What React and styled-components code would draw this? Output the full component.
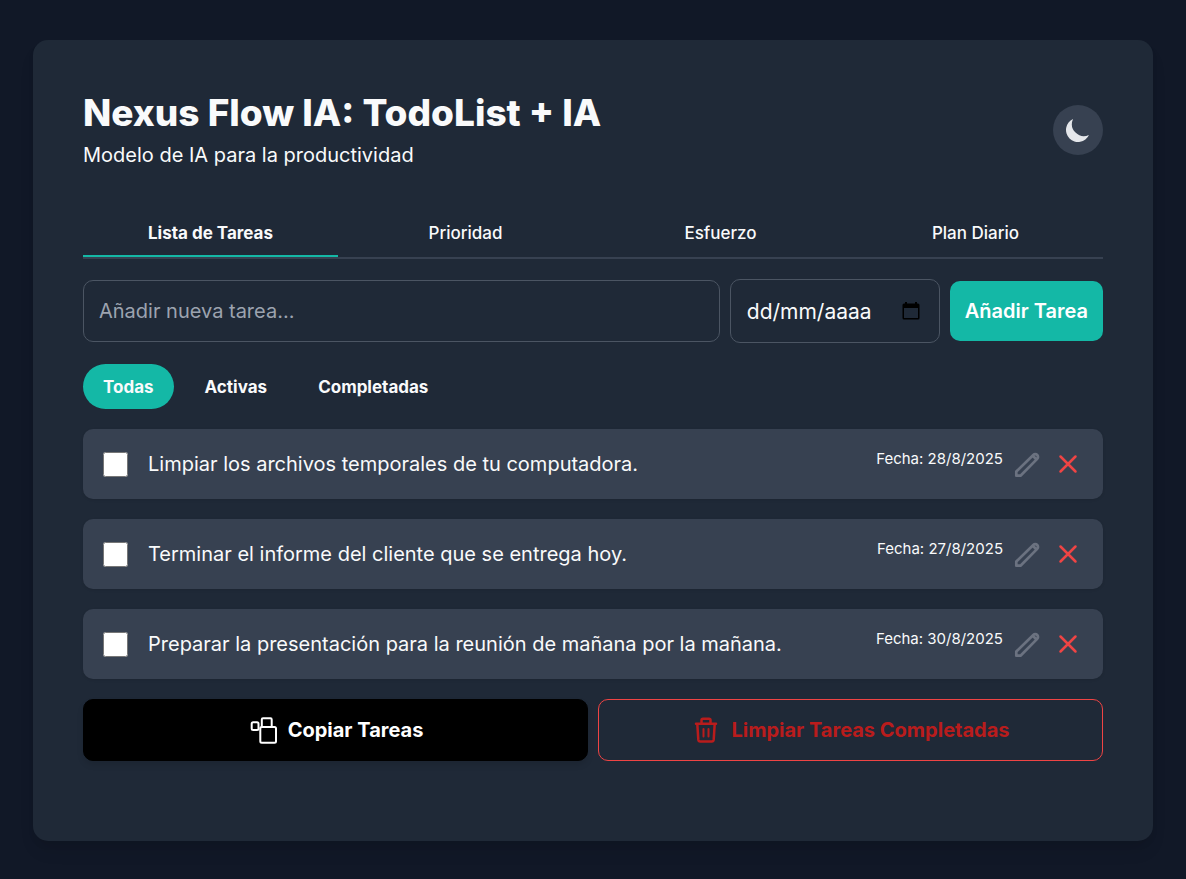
import React, { useState } from "react";
import styled, { createGlobalStyle } from "styled-components";

const GlobalStyle = createGlobalStyle`
  *, *::before, *::after { box-sizing: border-box; }
  body {
    margin: 0;
    min-height: 100vh;
    background: #111827;
    color: #f9fafb;
    font-family: Inter, "Liberation Sans", sans-serif;
    font-size: 20px;
    line-height: 30px;
  }
  button, input { font: inherit; color: inherit; margin: 0; }
  button { cursor: pointer; border: 0; background: none; padding: 0; }
  h1, p, ul { margin: 0; padding: 0; }
  svg { display: block; flex: none; }
`;

const Page = styled.div`
  padding: 40px 20px 38px;
`;

const Card = styled.main`
  max-width: 1120px;
  margin: 0 auto;
  padding: 50px 50px 80px;
  border-radius: 15px;
  background: #1f2937;
  box-shadow: 0 12px 18px -4px rgba(0, 0, 0, 0.1), 0 5px 8px -2px rgba(0, 0, 0, 0.06);
`;

const Header = styled.header`
  display: flex;
  align-items: center;
  justify-content: space-between;
  margin-bottom: 40px;
`;

const Title = styled.h1`
  margin-bottom: 5px;
  font-size: 37px;
  line-height: 45px;
  font-weight: 800;
`;

const ThemeButton = styled.button`
  display: grid;
  place-items: center;
  width: 50px;
  height: 50px;
  border-radius: 50%;
  background: #374151;
  color: #e5e7eb;
`;

const Tabs = styled.nav`
  display: flex;
  margin-bottom: 20px;
  border-bottom: 2px solid #374151;
`;

const Tab = styled.button`
  flex: 1;
  padding: 11px 10px 9px;
  border-bottom: 2px solid ${(p) => (p.$active ? "#14b8a6" : "transparent")};
  font-size: 17px;
  line-height: 25px;
  font-weight: ${(p) => (p.$active ? 700 : 500)};
`;

const AddForm = styled.form`
  display: flex;
  align-items: center;
  gap: 10px;
  margin-bottom: 21px;
`;

const TaskInput = styled.input`
  flex: 1;
  min-width: 0;
  padding: 15px;
  border: 1px solid #4b5563;
  border-radius: 10px;
  background: transparent;
  outline: none;
  &::placeholder { color: #9ca3af; opacity: 1; }
`;

const DateField = styled.div`
  display: flex;
  align-items: center;
  width: 210px;
  padding: 0 18px 0 16px;
  border: 1px solid #4b5563;
  border-radius: 10px;
`;

const DateInput = styled.input`
  flex: 1;
  min-width: 0;
  height: 62px;
  padding: 0;
  border: 0;
  background: transparent;
  outline: none;
  font-size: 21px;
  &::placeholder { color: #f9fafb; opacity: 1; }
`;

const AddButton = styled.button`
  padding: 15px;
  border-radius: 10px;
  background: #14b8a6;
  color: #fff;
  font-weight: 600;
`;

const Filters = styled.div`
  display: flex;
  gap: 11px;
  margin-bottom: 20px;
`;

const Filter = styled.button`
  padding: 11px 20px 9px;
  border-radius: 23px;
  background: ${(p) => (p.$active ? "#14b8a6" : "transparent")};
  font-size: 17px;
  line-height: 25px;
  font-weight: 700;
`;

const TaskList = styled.ul`
  display: grid;
  gap: 20px;
  margin-bottom: 20px;
  list-style: none;
`;

const TaskRow = styled.li`
  display: flex;
  align-items: center;
  padding: 20px;
  border-radius: 10px;
  background: #374151;
  box-shadow: 0 1px 3px rgba(0, 0, 0, 0.1);
`;

const TaskLabel = styled.label`
  display: flex;
  flex: 1;
  align-items: center;
  gap: 20px;
`;

const Checkbox = styled.input`
  width: 25px;
  height: 25px;
`;

const DueDate = styled.span`
  margin-right: 10px;
  padding-bottom: 10px;
  font-size: 15px;
  line-height: 20px;
`;

const IconButton = styled.button`
  color: ${(p) => p.$color};
  & + & { margin-left: 10px; }
`;

const Actions = styled.div`
  display: grid;
  grid-template-columns: 1fr 1fr;
  gap: 10px;
`;

const ActionButton = styled.button`
  display: flex;
  align-items: center;
  justify-content: center;
  gap: 10px;
  padding: 15px;
  border: 1px solid ${(p) => (p.$danger ? "#ef4444" : "#000")};
  border-radius: 10px;
  background: ${(p) => (p.$danger ? "transparent" : "#000")};
  color: ${(p) => (p.$danger ? "#b91c1c" : "#fff")};
  font-weight: 700;
  box-shadow: ${(p) => (p.$danger ? "none" : "0 4px 6px rgba(0, 0, 0, 0.1)")};
`;

const strokeProps = {
  fill: "none",
  stroke: "currentColor",
  strokeWidth: 2,
  strokeLinecap: "round",
  strokeLinejoin: "round",
  "aria-hidden": true,
};

const MoonIcon = () => (
  <svg width="30" height="30" viewBox="0 0 20 20" fill="currentColor" aria-hidden="true">
    <path d="M17.293 13.293A8 8 0 016.707 2.707a8.001 8.001 0 1010.586 10.586z" />
  </svg>
);

const CalendarIcon = () => (
  <svg width="20" height="20" viewBox="0 0 20 20" fill="#000" aria-hidden="true">
    <path fillRule="evenodd" d="M4 1h2v1.500h8V1h2v1.500h1A1.500 1.500 0 0118.500 4v13a1.500 1.500 0 01-1.500 1.500H3A1.500 1.500 0 011.500 17V4A1.500 1.500 0 013 2.500h1zM3 7v10h14V7z" />
  </svg>
);

const PencilIcon = () => (
  <svg width="30" height="30" viewBox="0 0 30 30" {...strokeProps} strokeWidth="2.700">
    <path d="M3.300 26.700v-4.200L20.300 6a2.700 2.700 0 013.900 3.900L7.500 26.700zM20 7l3.300 3.300" />
  </svg>
);

const CrossIcon = () => (
  <svg width="30" height="30" viewBox="0 0 24 24" {...strokeProps}>
    <path d="M6 6l12 12M18 6L6 18" />
  </svg>
);

const CopyIcon = () => (
  <svg width="30" height="30" viewBox="0 0 30 30" {...strokeProps}>
    <rect x="12.300" y="12" width="15.700" height="15.700" rx="1.500" />
    <path d="M13.800 12V4.500a1.200 1.200 0 011.200-1.200h7.500a1.200 1.200 0 011.200 1.200V12" />
    <rect x="3.700" y="7.300" width="6.800" height="7.700" rx="1.500" />
  </svg>
);

const TrashIcon = () => (
  <svg width="30" height="30" viewBox="0 0 30 30" {...strokeProps}>
    <path strokeWidth="2.500" d="M5 8.800h20M6.300 9l1 15.700a2 2 0 002 1.800h11.400a2 2 0 002-1.800l1-15.700M10.500 8.500V5.300a1.500 1.500 0 011.500-1.500h6a1.500 1.500 0 011.500 1.500v3.200" />
    <path d="M12.500 14v7.500M17.500 14v7.500" />
  </svg>
);

const TABS = ["Lista de Tareas", "Prioridad", "Esfuerzo", "Plan Diario"];
const FILTERS = ["Todas", "Activas", "Completadas"];
const TASKS = [
  { id: "t1", text: "Limpiar los archivos temporales de tu computadora.", date: "28/8/2025" },
  { id: "t2", text: "Terminar el informe del cliente que se entrega hoy.", date: "27/8/2025" },
  { id: "t3", text: "Preparar la presentación para la reunión de mañana por la mañana.", date: "30/8/2025" },
];

export default function App() {
  const [tab, setTab] = useState(TABS[0]);
  const [filter, setFilter] = useState(FILTERS[0]);
  return (
    <Page>
      <GlobalStyle />
      <Card>
        <Header>
          <div>
            <Title>Nexus Flow IA: TodoList + IA</Title>
            <p>Modelo de IA para la productividad</p>
          </div>
          <ThemeButton type="button" aria-label="Cambiar tema"><MoonIcon /></ThemeButton>
        </Header>
        <Tabs>
          {TABS.map((t) => (
            <Tab key={t} type="button" $active={t === tab} onClick={() => setTab(t)}>{t}</Tab>
          ))}
        </Tabs>
        <AddForm onSubmit={(e) => e.preventDefault()}>
          <TaskInput aria-label="Nueva tarea" placeholder="Añadir nueva tarea..." />
          <DateField>
            <DateInput aria-label="Fecha" placeholder="dd/mm/aaaa" />
            <button type="button" aria-label="Abrir calendario"><CalendarIcon /></button>
          </DateField>
          <AddButton type="submit">Añadir Tarea</AddButton>
        </AddForm>
        <Filters>
          {FILTERS.map((f) => (
            <Filter key={f} type="button" $active={f === filter} onClick={() => setFilter(f)}>{f}</Filter>
          ))}
        </Filters>
        <TaskList>
          {TASKS.map((task) => (
            <TaskRow key={task.id}>
              <TaskLabel htmlFor={task.id}>
                <Checkbox id={task.id} type="checkbox" />
                {task.text}
              </TaskLabel>
              <DueDate>Fecha: {task.date}</DueDate>
              <IconButton type="button" $color="#6b7280" aria-label="Editar"><PencilIcon /></IconButton>
              <IconButton type="button" $color="#ef4444" aria-label="Eliminar"><CrossIcon /></IconButton>
            </TaskRow>
          ))}
        </TaskList>
        <Actions>
          <ActionButton type="button"><CopyIcon />Copiar Tareas</ActionButton>
          <ActionButton type="button" $danger><TrashIcon />Limpiar Tareas Completadas</ActionButton>
        </Actions>
      </Card>
    </Page>
  );
}
